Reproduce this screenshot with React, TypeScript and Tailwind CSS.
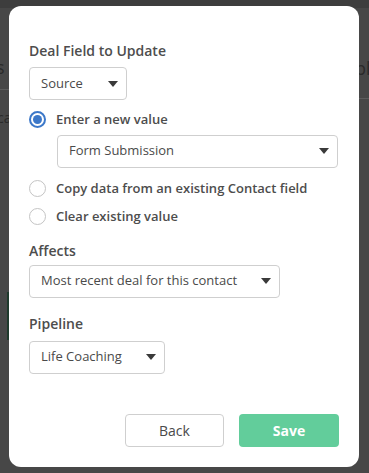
import React from "react";

const Caret = () => (
  <svg width="10" height="6" viewBox="0 0 10 6" className="shrink-0">
    <path d="M0 0h10L5 6z" fill="#3a3a3a" />
  </svg>
);

function Select({ value, className }: { value: string; className: string }) {
  return (
    <div
      className={`flex h-[33px] items-center justify-between rounded-[4px] border border-[#cfcfcf] bg-white pl-[11px] pr-[8px] text-[13px] text-[#4a4a4a] ${className}`}
    >
      <span>{value}</span>
      <Caret />
    </div>
  );
}

function Radio({ checked, label }: { checked?: boolean; label: string }) {
  return (
    <div className="flex items-center gap-[10px]">
      {checked ? (
        <span className="flex h-[17px] w-[17px] items-center justify-center rounded-full border-2 border-[#3c78c9] bg-white">
          <span className="h-[9px] w-[9px] rounded-full bg-[#3c78c9]" />
        </span>
      ) : (
        <span className="h-[17px] w-[17px] rounded-full border border-[#c4c4c4] bg-white" />
      )}
      <span className="text-[13px] font-semibold text-[#4d4d4d]">{label}</span>
    </div>
  );
}

export default function App() {
  return (
    <div
      className="relative h-[473px] w-[369px] overflow-hidden bg-[#474747]"
      style={{ fontFamily: '"Open Sans", "Liberation Sans", sans-serif' }}
    >
      {/* dimmed page behind the dialog */}
      <div className="absolute left-0 top-0 h-[8px] w-full bg-[#3d3d3d]" />
      <div className="absolute left-0 top-[89px] h-px w-[12px] bg-[#5c5c5c]" />
      <div className="absolute left-[352px] top-[98px] h-px w-[17px] bg-[#5c5c5c]" />
      <span className="absolute left-[-4px] top-[54px] text-[18px] text-[#2a2a2a]">s</span>
      <span className="absolute left-[-3px] top-[107px] text-[14px] text-[#2a2a2a]">ca</span>
      <span className="absolute left-[355px] top-[55px] text-[18px] text-[#2a2a2a]">pla</span>
      <div className="absolute left-[7px] top-[292px] h-[48px] w-[3px] bg-[#1f3a2c]" />

      {/* dialog */}
      <div className="absolute left-[9px] top-[6px] flex h-[461px] w-[350px] flex-col rounded-[12px] bg-white px-[20px] pb-[20px] pt-[34px]">
        <div className="text-[14px] font-semibold text-[#4d4d4d]">Deal Field to Update</div>
        <Select value="Source" className="mt-[6px] w-[98px]" />

        <div className="mt-[10px] flex flex-col">
          <Radio checked label="Enter a new value" />
          <Select value="Form Submission" className="ml-[28px] mt-[5px] w-[281px]" />
          <div className="mt-[11px]">
            <Radio label="Copy data from an existing Contact field" />
          </div>
          <div className="mt-[9px]">
            <Radio label="Clear existing value" />
          </div>
        </div>

        <div className="mt-[13px] text-[14px] font-semibold text-[#4d4d4d]">Affects</div>
        <Select value="Most recent deal for this contact" className="mt-[4px] w-[251px]" />

        <div className="mt-[15px] text-[14px] font-semibold text-[#4d4d4d]">Pipeline</div>
        <Select value="Life Coaching" className="mt-[7px] w-[136px]" />

        <div className="mt-auto flex justify-end gap-[15px]">
          <button className="h-[33px] w-[99px] rounded-[4px] border border-[#cfcfcf] bg-white text-[14px] text-[#4a4a4a]">
            Back
          </button>
          <button className="h-[33px] w-[100px] rounded-[4px] bg-[#62cd9b] text-[14px] font-bold text-white">
            Save
          </button>
        </div>
      </div>
    </div>
  );
}
